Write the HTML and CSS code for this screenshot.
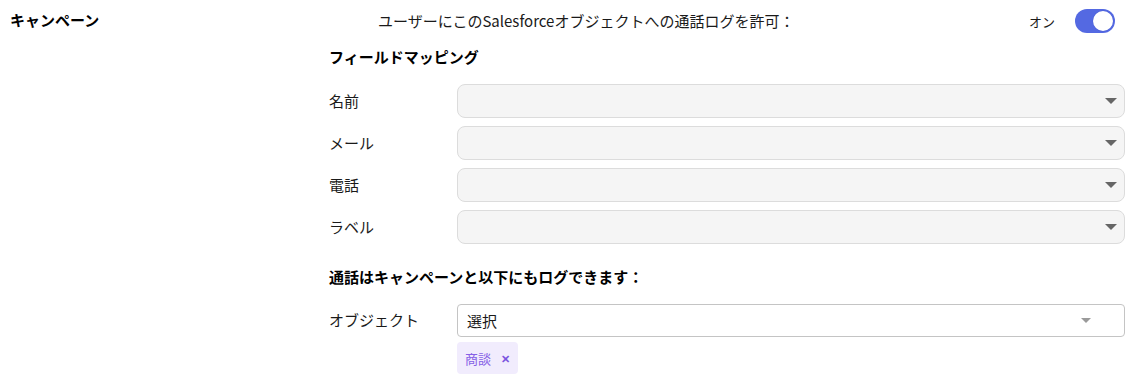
FILE: index.html
```html
<!DOCTYPE html>
<html lang="ja">
<head>
<meta charset="utf-8">
<link rel="stylesheet" href="styles.css">
</head>
<body>
<div class="page">
  <div class="side">
    <div class="title">キャンペーン</div>
  </div>
  <div class="main">
    <div class="header">
      <div class="allow">ユーザーにこのSalesforceオブジェクトへの通話ログを許可：</div>
      <div class="switch-wrap">
        <span class="on">オン</span>
        <span class="switch"><span class="knob"></span></span>
      </div>
    </div>
    <div class="section-title">フィールドマッピング</div>
    <div class="rows">
      <div class="row"><div class="label">名前</div><div class="select"><span class="arrow"></span></div></div>
      <div class="row"><div class="label">メール</div><div class="select"><span class="arrow"></span></div></div>
      <div class="row"><div class="label">電話</div><div class="select"><span class="arrow"></span></div></div>
      <div class="row"><div class="label">ラベル</div><div class="select"><span class="arrow"></span></div></div>
    </div>
    <div class="section-title second">通話はキャンペーンと以下にもログできます：</div>
    <div class="row obj-row">
      <div class="label">オブジェクト</div>
      <div class="obj-col">
        <div class="select white"><span class="value">選択</span><span class="arrow light"></span></div>
        <div class="tags"><span class="tag">商談<span class="x">✕</span></span></div>
      </div>
    </div>
  </div>
</div>
</body>
</html>
```

FILE: styles.css
```css
* { box-sizing: border-box; }
html, body { margin: 0; padding: 0; background: #fff; }
body {
  font-family: "Noto Sans CJK JP", "Noto Sans", sans-serif;
  font-size: 15px;
  color: #1a1a1a;
}
.page {
  display: grid;
  grid-template-columns: 329px 1fr;
  padding-right: 17px;
}
.side { padding-left: 10px; padding-top: 9px; }
.title { font-weight: 700; line-height: 22px; color: #000; }
.main { display: flex; flex-direction: column; }
.header {
  display: flex;
  align-items: center;
  justify-content: space-between;
  height: 42px;
  padding-left: 49px;
}
.allow { line-height: 22px; }
.switch-wrap { display: flex; align-items: center; gap: 20px; margin-right: 10px; }
.on { font-size: 13px; }
.switch {
  width: 40px; height: 24px;
  border-radius: 12px;
  background: #5469e2;
  position: relative;
  display: block;
}
.knob {
  position: absolute;
  right: 2px; top: 2px;
  width: 20px; height: 20px;
  border-radius: 50%;
  background: #fff;
  box-shadow: 0 0 0 0.5px #4a5fd8;
}
.section-title { font-weight: 700; color: #000; line-height: 22px; margin-top: 4px; }
.section-title.second { margin-top: 22px; }
.rows { display: flex; flex-direction: column; gap: 8px; margin-top: 16px; }
.row { display: grid; grid-template-columns: 128px 1fr; align-items: center; }
.label { line-height: 22px; }
.select {
  height: 34px;
  border: 1px solid #dcdcdc;
  border-radius: 8px;
  background: #f5f5f5;
  display: flex;
  align-items: center;
  justify-content: space-between;
  padding: 0 7px 0 9px;
  position: relative;
}
.select .arrow {
  margin-left: auto;
  width: 0; height: 0;
  border-left: 6px solid transparent;
  border-right: 6px solid transparent;
  border-top: 6px solid #666;
}
.select.white {
  background: #fff;
  border-color: #c4c4c4;
  border-radius: 4px;
  height: 33px;
  padding-right: 33px;
}
.select .arrow.light {
  border-left-width: 5px; border-right-width: 5px; border-top-width: 5px;
  border-top-color: #9a9a9a;
}
.value { font-size: 15px; }
.obj-row { margin-top: 16px; align-items: start; }
.obj-row .label { padding-top: 5px; }
.tags { display: flex; margin-top: 5px; }
.tag {
  display: flex; align-items: center; gap: 10px;
  height: 32px;
  padding: 0 8px 0 8px;
  background: #f1ecfd;
  border-radius: 4px;
  color: #8660e6;
  font-size: 13px;
}
.x { font-size: 11px; font-weight: 700; color: #7b55e0; }
```
